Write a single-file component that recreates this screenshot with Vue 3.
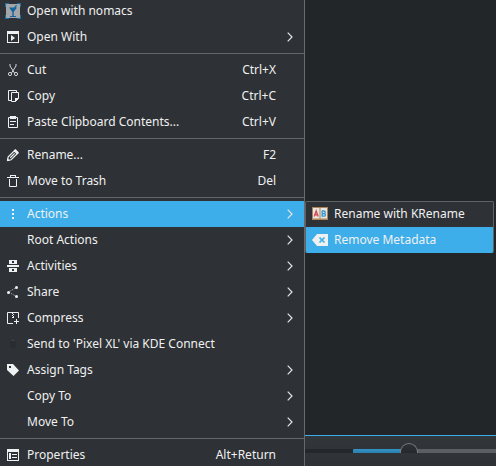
<script setup>
const groups = [
  [
    { label: 'Open with nomacs', icon: 'nomacs' },
    { label: 'Open With', icon: 'open', sub: true },
  ],
  [
    { label: 'Cut', icon: 'cut', key: 'Ctrl+X' },
    { label: 'Copy', icon: 'copy', key: 'Ctrl+C' },
    { label: 'Paste Clipboard Contents...', icon: 'paste', key: 'Ctrl+V' },
  ],
  [
    { label: 'Rename...', icon: 'rename', key: 'F2' },
    { label: 'Move to Trash', icon: 'trash', key: 'Del' },
  ],
  [
    { label: 'Actions', icon: 'dots', sub: true, active: true },
    { label: 'Root Actions', sub: true },
    { label: 'Activities', icon: 'activities', sub: true },
    { label: 'Share', icon: 'share', sub: true },
    { label: 'Compress', icon: 'compress', sub: true },
    { label: "Send to 'Pixel XL' via KDE Connect", icon: 'phone' },
    { label: 'Assign Tags', icon: 'tag', sub: true },
    { label: 'Copy To', sub: true },
    { label: 'Move To', sub: true },
  ],
  [{ label: 'Properties', icon: 'properties', key: 'Alt+Return' }],
]

const icons = {
  nomacs: `<path fill="#a2a6aa" d="M1 1h14v14H1z"/><path fill="#1a6ea6" d="M0 0h4v1H1v3H0zM12 0h4v4h-1V1h-3zM0 12h1v3h3v1H0zM15 12h1v4h-4v-1h3z"/><path fill="#15659c" d="M4 4.500h5L11 2l1 .5-1.500 2H12L8.700 9v4H11v1H5v-1h2.300V9z"/>`,
  open: `<path fill="#eff0f1" fill-rule="evenodd" d="M2 2h12v12H2zM3 5v8h10V5zM6 6l4 3-4 3z"/>`,
  cut: `<g fill="none" stroke="#d6d8da"><path d="M5 2v2l4.500 7M11 2v2l-4.500 7"/><circle cx="5" cy="12" r="1.600"/><circle cx="11" cy="12" r="1.600"/></g>`,
  copy: `<path fill="none" stroke="#eff0f1" d="M6 12.500H3.500v-10h8V4M6.500 4.500h7v6l-3 3h-4z"/><path fill="#eff0f1" d="M10 10h4l-4 4z"/>`,
  paste: `<path fill="none" stroke="#eff0f1" d="M3.500 3.500h9v10h-9z"/><path fill="#eff0f1" d="M5 2h6v3H5zM5 7h6v1H5zM5 10h4v1H5z"/>`,
  rename: `<path fill="none" stroke="#eff0f1" stroke-width="1.200" d="M2.600 13.400l.6-3.500 6.700-6.600 2.900 2.900-6.700 6.600zM5.200 10.800l4.500-4.400"/><path fill="#eff0f1" d="M8.500 4L10.500 2 14 5.500 12 7.500zM2 11l3 3H2z"/>`,
  trash: `<path fill="#eff0f1" d="M5 2h6v2h3v1H2V4h3zM6 3v1h4V3z" fill-rule="evenodd"/><path fill="none" stroke="#eff0f1" d="M4.500 6v7.500h7V6"/>`,
  dots: `<path fill="#eff0f1" d="M7 3h2v2H7zM7 7h2v2H7zM7 11h2v2H7z"/>`,
  activities: `<path fill="#eff0f1" fill-rule="evenodd" d="M4 2h8v4H4zM7 3v2h2V3zM2 7h12v2H2zM4 10h8v4H4zM7 11v2h2v-2z"/>`,
  share: `<path fill="none" stroke="#b8babd" stroke-dasharray="1 1" d="M11.500 3.500L3.500 8l8 4.500"/><g fill="#eff0f1"><circle cx="3.500" cy="8.500" r="1.500"/><circle cx="11.500" cy="3.500" r="1.500"/><circle cx="11.500" cy="12.500" r="1.500"/></g>`,
  compress: `<path fill="none" stroke="#eff0f1" d="M8 13.500H2.500v-11h11V8M9 11.500h5M11.500 9v5"/><path fill="#eff0f1" d="M7 3h1v1H7zM8 4h1v1H8zM7 5h1v1H7zM8 6h1v1H8zM7 7h2v1H7z"/>`,
  phone: `<path fill="#2a2d30" d="M5 4h6v8H5z"/><path fill="#3c4043" d="M6 4h4v1H6z"/>`,
  tag: `<path fill="#eff0f1" fill-rule="evenodd" d="M2 2h6l6 6.500L8.500 14 2 8zM4 4v2h2V4z"/>`,
  properties: `<path fill="#eff0f1" fill-rule="evenodd" d="M2 2h12v12H2zM3 5v8h10V5zM4 6h2v6H4zM7 7h5v1H7zM7 10h5v1H7z"/>`,
  krename: `<path fill="#a98559" d="M0 1h16v13H0z"/><path fill="#e9e4dd" d="M1 2h6.500v10.500H1zM8.500 2H15v10.500H8.500z"/><path fill="none" stroke="#d6445a" stroke-width="1.300" d="M2.200 10.500L4.200 5 6.200 10.500M3 8.800h2.500"/><path fill="none" stroke="#2e96d8" stroke-width="1.300" d="M10.200 5h1.600q1.400 0 1.400 1.300T11.800 7.600h-1.600 1.600q1.700 0 1.700 1.300T11.800 10.200h-1.600V4.500"/>`,
  clear: `<path fill="#eff0f1" d="M0 8l5-6h11v12H5z"/><path fill="none" stroke="#3daee9" stroke-width="1.700" d="M7.500 5.500l5 5M12.500 5.500l-5 5"/>`,
}
</script>

<template>
  <main class="desktop">
    <nav class="menu">
      <section v-for="(group, g) in groups" :key="g" class="group">
        <div v-for="item in group" :key="item.label" class="item" :class="{ active: item.active }">
          <svg class="icon" viewBox="0 0 16 16" v-html="icons[item.icon] || ''" />
          <span class="label">{{ item.label }}</span>
          <span v-if="item.key" class="key">{{ item.key }}</span>
          <svg v-if="item.sub" class="arrow" viewBox="0 0 6 10"><path d="M.7.7L5 5 .7 9.300" /></svg>
        </div>
      </section>
    </nav>
    <div class="side">
      <div class="submenu">
        <div class="item"><svg class="icon" viewBox="0 0 16 16" v-html="icons.krename" /><span>Rename with KRename</span></div>
        <div class="item active"><svg class="icon" viewBox="0 0 16 16" v-html="icons.clear" /><span>Remove Metadata</span></div>
      </div>
      <div class="status">
        <div class="slider"><i class="fill"></i><i class="knob"></i></div>
      </div>
    </div>
  </main>
</template>

<style>
body { background: #fff; overflow: hidden; }
</style>
<style scoped>
.desktop { display: flex; width: 496px; height: 466px; overflow: hidden; background: #232629; color: #eff0f1; font: 12px/26px "Noto Sans", sans-serif; }
.menu { box-sizing: border-box; width: 305px; flex: none; height: 468px; margin-top: -2px; border-right: 1px solid #68696d; background: #2e3135; }
.group + .group { border-top: 1px solid #646669; margin-top: 3px; padding-top: 3px; }
.item { display: flex; align-items: center; height: 26px; box-sizing: border-box; padding-left: 5px; white-space: nowrap; }
.active { background: #3daee9; }
.icon { width: 16px; height: 16px; flex: none; margin-right: 6px; }
.label { flex: 1; }
.key { margin-right: 28px; }
.arrow { width: 6px; height: 10px; margin-right: 11px; fill: none; stroke: #e4e5e6; stroke-width: 1.200; }
.side { flex: 1; display: flex; flex-direction: column; justify-content: space-between; padding-top: 201px; }
.submenu { width: 189px; box-sizing: border-box; height: 52px; border: 1px solid #5f6265; border-bottom-color: #3daee9; border-radius: 2px; background: #2e3135; overflow: hidden; }
.submenu .item { padding-left: 6px; height: 25px; padding-bottom: 1px; }
.submenu .active { height: 26px; padding-bottom: 0; }
.status { box-sizing: border-box; height: 31px; border-top: 1px solid #3daee9; background: linear-gradient(#31363b, #2f3235); padding-top: 13px; }
.slider { height: 4px; display: flex; background: linear-gradient(90deg, #25282b 48px, #5c5f62 48px); position: relative; }
.fill { width: 56px; margin-left: 48px; height: 4px; background: linear-gradient(#3293c8, #2b7fac); border-radius: 2px 0 0 0; }
.knob { position: absolute; left: 95px; top: -6px; width: 18px; height: 10px; box-sizing: border-box; border: 1px solid #777b7f; border-bottom: 0; border-radius: 9px 9px 0 0; background: linear-gradient(#2e3236, #26292c); }
</style>
